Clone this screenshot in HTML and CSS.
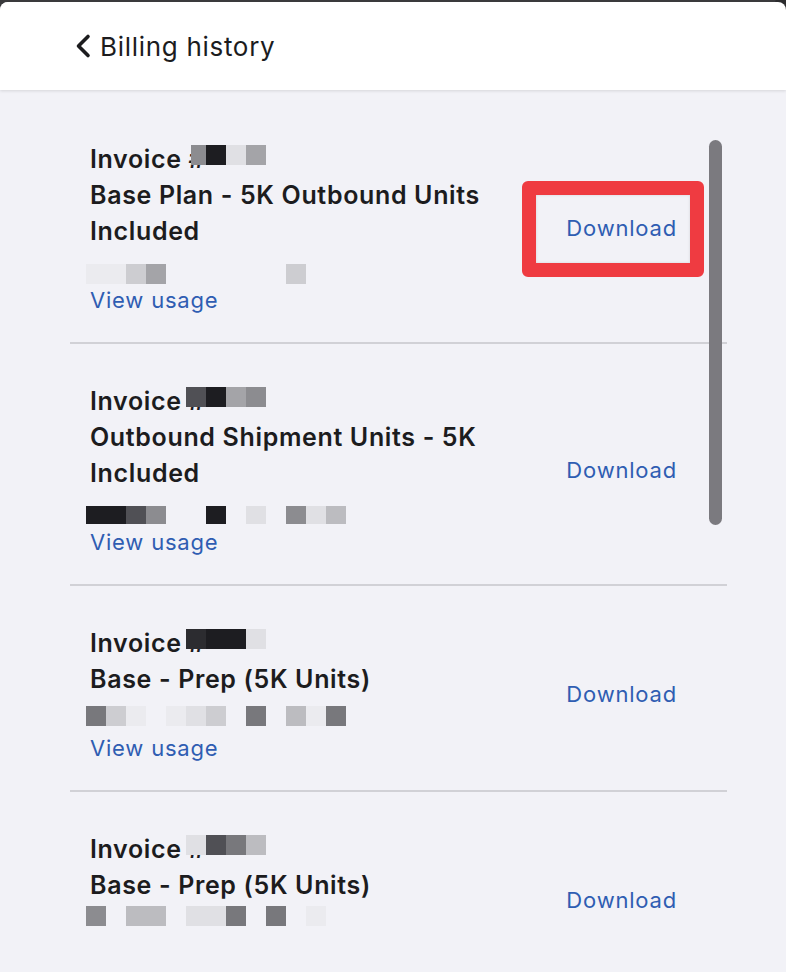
FILE: index.html
```html
<!DOCTYPE html>
<html lang="en">
<head>
<meta charset="utf-8">
<title>Billing history</title>
<link rel="stylesheet" href="styles.css">
</head>
<body>
<div class="sheet">
  <header class="header">
    <svg class="back" width="18" height="26" viewBox="0 0 18 26" aria-hidden="true"><path d="M14 3.5 L4.5 13 L14 22.5" fill="none" stroke="#1c1c1e" stroke-width="3.6" stroke-linecap="round" stroke-linejoin="round"/></svg>
    <h1 class="title">Billing history</h1>
  </header>

  <div class="list">
    <div class="item">
      <div class="info">
        <div class="name"><span class="inv">Invoice #</span><span class="mask"><i class="px w15 c5"></i><i class="px c9"></i><i class="px c1"></i><i class="px c4"></i></span></div>
        <div class="name">Base Plan - 5K Outbound Units Included</div>
        <div class="meta m15"><i class="px c0"></i><i class="px c0"></i><i class="px c2"></i><i class="px c4"></i><i class="px e"></i><i class="px e"></i><i class="px e"></i><i class="px e"></i><i class="px e"></i><i class="px e"></i><i class="px c2"></i></div>
        <a class="link" href="#">View usage</a>
      </div>
      <a class="link dl" href="#">Download<span class="mark"></span></a>
    </div>

    <div class="item">
      <div class="info">
        <div class="name"><span class="inv">Invoice #</span><span class="mask"><i class="px c7"></i><i class="px c9"></i><i class="px c4"></i><i class="px c5"></i></span></div>
        <div class="name">Outbound Shipment Units - 5K Included</div>
        <div class="meta m15 short"><i class="px c9"></i><i class="px c9"></i><i class="px c7"></i><i class="px c5"></i><i class="px e"></i><i class="px e"></i><i class="px c9"></i><i class="px e"></i><i class="px c1"></i><i class="px e"></i><i class="px c5"></i><i class="px c1"></i><i class="px c3"></i></div>
        <a class="link" href="#">View usage</a>
      </div>
      <a class="link dl" href="#">Download</a>
    </div>

    <div class="item">
      <div class="info">
        <div class="name"><span class="inv">Invoice #</span><span class="mask"><i class="px c8"></i><i class="px c9"></i><i class="px c9"></i><i class="px c1"></i></span></div>
        <div class="name">Base - Prep (5K Units)</div>
        <div class="meta m9"><i class="px c6"></i><i class="px c2"></i><i class="px c0"></i><i class="px e"></i><i class="px c0"></i><i class="px c1"></i><i class="px c2"></i><i class="px e"></i><i class="px c6"></i><i class="px e"></i><i class="px c3"></i><i class="px c0"></i><i class="px c6"></i></div>
        <a class="link" href="#">View usage</a>
      </div>
      <a class="link dl" href="#">Download</a>
    </div>

    <div class="item">
      <div class="info">
        <div class="name"><span class="inv">Invoice #</span><span class="mask"><i class="px c1"></i><i class="px c7"></i><i class="px c6"></i><i class="px c3"></i></span></div>
        <div class="name">Base - Prep (5K Units)</div>
        <div class="meta m3"><i class="px c5"></i><i class="px e"></i><i class="px c3"></i><i class="px c3"></i><i class="px e"></i><i class="px c1"></i><i class="px c1"></i><i class="px c6"></i><i class="px e"></i><i class="px c6"></i><i class="px e"></i><i class="px c0"></i></div>
        <div class="spacer"></div>
      </div>
      <a class="link dl" href="#">Download</a>
    </div>
  </div>

  <div class="scrollbar"></div>
</div>
<div class="close"></div>
</body>
</html>
```

FILE: styles.css
```css
* { box-sizing: border-box; }

html, body {
  margin: 0;
  padding: 0;
  height: 972px;
  overflow: hidden;
}

body {
  background: #3a3a3c;
  font-family: Inter, "Noto Sans", "Liberation Sans", sans-serif;
  color: #1c1c1e;
  position: relative;
}

.sheet {
  position: relative;
  margin-top: 2px;
  height: 970px;
  background: #f2f2f7;
  border-radius: 8px 8px 0 0;
  overflow: hidden;
}

.header {
  height: 88px;
  background: #ffffff;
  display: flex;
  align-items: center;
  gap: 8px;
  padding-left: 74px;
  box-shadow: 0 1px 3px rgba(0, 0, 0, 0.12);
  position: relative;
  z-index: 1;
}

.back { display: block; margin-top: -1px; }

.title {
  margin: 0;
  font-size: 26px;
  font-weight: 400;
  letter-spacing: 0.7px;
  color: #1c1c1e;
}

.list {
  margin: 0 59px 0 70px;
  padding-top: 12px;
}

.item {
  display: flex;
  align-items: center;
  justify-content: space-between;
  padding: 39px 50px 27px 20px;
  border-bottom: 2px solid #d1d1d6;
}

.info {
  width: 440px;
  display: flex;
  flex-direction: column;
  align-items: flex-start;
}

.name {
  font-size: 25px;
  font-weight: 600;
  line-height: 36px;
  letter-spacing: 0.65px;
  color: #1c1c1e;
}

.inv { display: inline-block; width: 96px; white-space: nowrap; }

.mask {
  display: inline-flex;
  vertical-align: top;
  margin-top: 4px;
  position: relative;
}

.meta {
  height: 36px;
  display: flex;
  align-items: flex-start;
  margin-left: -4px;
}
.m15 { padding-top: 15px; }
.m9 { padding-top: 9px; }
.m3 { padding-top: 3px; }
.meta.short .px { height: 18px; }

.spacer { height: 30px; }

.px {
  display: block;
  width: 20px;
  height: 20px;
  flex: none;
  background: transparent;
}
.px.w15 { width: 15px; margin-left: 5px; }
.px.e { background: transparent; }
.c0 { background: #ebebef; }
.c1 { background: #e0e0e4; }
.c2 { background: #cdcdd1; }
.c3 { background: #bcbcc0; }
.c4 { background: #a4a4a8; }
.c5 { background: #8c8c90; }
.c6 { background: #78787c; }
.c7 { background: #505055; }
.c8 { background: #2c2c30; }
.c9 { background: #1d1d21; }

.link {
  font-size: 22px;
  line-height: 30px;
  font-weight: 400;
  color: #2f5db2;
  text-decoration: none;
  letter-spacing: 0.8px;
}

.dl {
  position: relative;
}

.mark {
  position: absolute;
  left: -44px;
  top: -32px;
  width: 182px;
  height: 96px;
  border: 14px solid #ef3b41;
  border-radius: 6px;
  box-shadow: inset 0 0 3px rgba(0, 0, 0, 0.12);
}

.scrollbar {
  position: absolute;
  left: 709px;
  top: 138px;
  width: 13px;
  height: 385px;
  border-radius: 7px;
  background: #7b7a7f;
}

.close {
  position: absolute;
  left: 775px;
  top: -14px;
  width: 38px;
  height: 38px;
  border-radius: 50%;
  background: #2c2c2e;
}
```
